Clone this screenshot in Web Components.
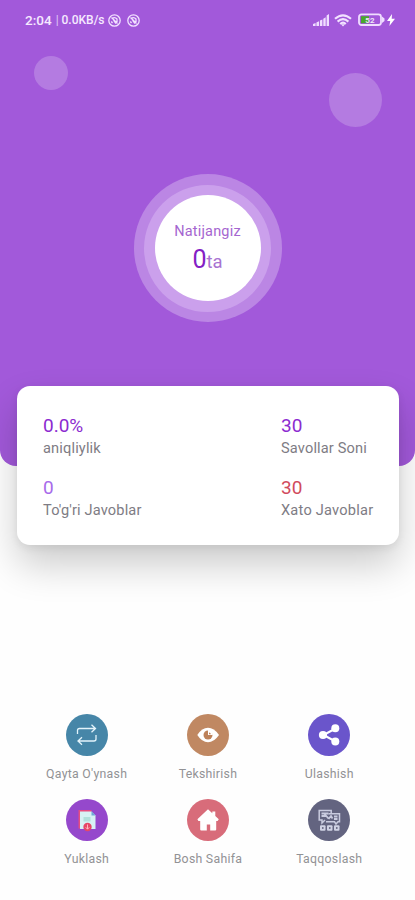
<!DOCTYPE html>
<html lang="uz">
<head>
<meta charset="utf-8">
<meta name="viewport" content="width=device-width">
<title>Natijangiz</title>
<style>
html,body{margin:0;height:100%;background:#fefefe}
body{font-family:Roboto,"Liberation Sans",sans-serif;overflow:hidden}
</style>
</head>
<body>
<result-screen></result-screen>
<script>
const define = (name, html) => customElements.define(name, class extends HTMLElement {
  constructor() {
    super();
    const t = document.createElement('template');
    t.innerHTML = html;
    this.attachShadow({mode: 'open'}).append(t.content.cloneNode(true));
  }
});

define('status-bar', `
<style>
:host{display:flex;align-items:center;height:40px;box-sizing:border-box;padding:0 20px 0 25px;color:#f6e9ff;font-weight:500;white-space:nowrap}
.time{font-size:13.5px;width:28px}
.sep{font-size:12px;width:8.5px;text-align:center;opacity:.75;font-weight:400}
.rate{font-size:12px;width:46.5px}
svg{display:block;flex:none}
.mute{margin-right:6px}
.gap{flex:1}
</style>
<span class="time">2:04</span><span class="sep">|</span><span class="rate">0.0KB/s</span>
<svg class="mute" width="13" height="13" viewBox="0 0 13 13" fill="none" stroke="#f2e2ff" stroke-width="1.3"><circle cx="6.5" cy="6.5" r="5.7"/><path d="M3.300 7.500L4.500 9M4 4.300Q7 2.600 9 5v3M3.500 3.500l6 6M5.500 6l2.500 3.500"/></svg>
<svg class="mute" width="13" height="13" viewBox="0 0 13 13" fill="none" stroke="#f2e2ff" stroke-width="1.3"><circle cx="6.5" cy="6.5" r="5.7"/><path d="M3.300 7.500L4.500 9M4 4.300Q7 2.600 9 5v3M3.500 3.500l6 6M5.500 6l2.500 3.500"/></svg>
<span class="gap"></span>
<svg width="17" height="13" viewBox="0 0 17 13" fill="#efddff"><path d="M0 12V10l2.6-1v3zM3.4 12V8.5L6 7.3V12zM6.9 12V6.6l2.5-1.2V12zM10.3 12V4.7l2.4-1.5V12zM13.6 12V1.600L16 0v12z"/></svg>
<svg style="margin:0 6px 0 4px" width="18" height="13" viewBox="0 0 18 13" fill="none" stroke="#f2e2ff" stroke-width="2.1"><path d="M1 4.8Q9-2.2 17 4.8M3.6 7.6Q9 2.8 14.4 7.6M6.2 10Q9 7.400 11.8 10"/><path d="M7 10.2h4l-2 2.3z" fill="#f2e2ff" stroke="none"/></svg>
<svg width="27" height="14" viewBox="0 0 27 14"><rect x="1" y="1.4" width="22" height="10.6" rx="2.5" fill="none" stroke="#f0deff" stroke-width="1.8"/><path d="M24 3.5l2.5 2v2.5L24 10z" fill="#f0deff"/><path d="M3 3.2h8v7H3z" fill="#4aa62c"/><text x="7.3" y="9.8" font-family="Roboto,sans-serif" font-size="8" font-weight="700" fill="#efe9f5">52</text></svg>
<svg style="margin-left:2px" width="8" height="12" viewBox="0 0 8 12" fill="#fff"><path d="M5 0L0 7h3.2L2.4 12 8 4.8H4.7z"/></svg>`);

define('score-badge', `
<style>
:host{display:grid;place-items:center;width:148px;height:148px;border-radius:50%;background:#bb86e4}
.mid{display:grid;place-items:center;width:127px;height:127px;border-radius:50%;background:#cba0ec}
.in{display:flex;flex-direction:column;align-items:center;width:106px;height:106px;box-sizing:border-box;padding-top:28px;border-radius:50%;background:#fff;color:#a566d0}
.label{font-size:14.5px;line-height:18px;letter-spacing:.18px}
.value{font-size:18.500px;line-height:32px;margin-top:3px;letter-spacing:0;color:#a873d2}
::slotted(b){font-weight:400;font-size:25px;color:#8420c4}
</style>
<div class="mid"><div class="in"><span class="label">Natijangiz</span><span class="value"><slot></slot>ta</span></div></div>`);

define('stat-item', `
<style>
:host{display:block;color:#7e7c84;white-space:nowrap;height:62px}
.n{font-size:19px;line-height:24px;color:var(--tone,#8c2bd0)}
.l{font-size:14.6px;line-height:18px;margin-top:1px;letter-spacing:var(--track,.15px)}
</style>
<div class="n"><slot name="value"></slot></div><div class="l"><slot></slot></div>`);

define('stats-card', `
<style>
:host{display:grid;grid-template-columns:238px 1fr;align-content:start;box-sizing:border-box;height:159px;margin:0 16px 0 17px;padding:28px 0 0 26px;border-radius:13px;background:#fff;box-shadow:0 20px 38px rgba(0,0,0,.2),0 3px 8px rgba(0,0,0,.07)}
</style><slot></slot>`);

define('action-button', `
<style>
:host{display:flex;flex-direction:column;align-items:center;height:85px;color:#929295;font-size:12.3px;white-space:nowrap}
.disc{display:grid;place-items:center;width:42px;height:42px;border-radius:50%;background:var(--disc)}
.label{line-height:16px;margin-top:10px;letter-spacing:var(--track,.27px)}
::slotted(svg){display:block;width:42px;height:42px}
</style>
<div class="disc"><slot name="icon"></slot></div><span class="label"><slot></slot></span>`);

define('result-screen', `
<style>
:host{display:flex;flex-direction:column;height:900px;position:relative}
header{flex:none;height:466px;background:#a259da;border-radius:0 0 16px 16px;display:flex;flex-direction:column}
score-badge{margin:134.4px auto 0}
.bubble{position:absolute;border-radius:50%;background:#b47be1}
stats-card{flex:none;margin-top:-80px;position:relative}
nav{display:grid;grid-template-columns:repeat(3,121.3px);margin:169.4px 0 0 26px}
</style>
<header>
<status-bar></status-bar>
<i class="bubble" style="left:34px;top:56px;width:34px;height:34px"></i>
<i class="bubble" style="left:328.5px;top:73px;width:53px;height:54px"></i>
<score-badge><b>0</b></score-badge>
</header>
<stats-card>
<stat-item><span slot="value">0.0%</span>aniqliylik</stat-item>
<stat-item><span slot="value">30</span>Savollar Soni</stat-item>
<stat-item style="--tone:#a76bea"><span slot="value">0</span>To'g'ri Javoblar</stat-item>
<stat-item style="--tone:#d14b5c;--track:.22px"><span slot="value">30</span>Xato Javoblar</stat-item>
</stats-card>
<nav>
<action-button style="--disc:#4686a8">
<svg slot="icon" viewBox="0 0 42 42" fill="none" stroke="#e4f4fb" stroke-width="1.3"><path d="M11.5 20v-3.5q0-2 2-2H29M25.5 10.8l4 3.7-4 3.7M30 21v4q0 2-2 2H12.500M16 23.300l-4 3.700 4 3.700"/></svg>Qayta O'ynash</action-button>
<action-button style="--disc:#c08862">
<svg slot="icon" viewBox="0 0 42 42"><path d="M10.300 21Q15 13.800 21 13.800T32 21Q27 28.300 21 28.300T10.300 21z" fill="#fff"/><circle cx="21" cy="21" r="4.500" fill="#bd8159"/><path d="M21 16V21h4.700q1-5-4.700-5z" fill="#fff"/><path d="M22 18.500v1.800h1.800q0-1.800-1.800-1.800z" fill="#bd8159"/></svg>Tekshirish</action-button>
<action-button style="--disc:#6a55cb">
<svg slot="icon" viewBox="0 0 42 42" fill="#fff"><path d="M27.500 14.500L15.500 21l12 6.500" fill="none" stroke="#fff" stroke-width="2"/><circle cx="27.300" cy="14.300" r="4"/><circle cx="15" cy="21" r="4.100"/><circle cx="27.300" cy="27.500" r="4"/></svg>Ulashish</action-button>
<action-button style="--disc:#9548cc">
<svg slot="icon" viewBox="0 0 42 42"><path d="M12.500 11h13v18.500h-13z" fill="#e64c80"/><path d="M14 12.500h11.500l4 4V30H14z" fill="#d7f2f4"/><path d="M25.500 12l4 4.500h-4z" fill="#70a8d6"/><path d="M17.500 18h7v4.500h-7z" fill="#b1e1dc"/><circle cx="21.500" cy="28" r="4.200" fill="#e64866"/><path d="M21.500 25.500v4.500M19.700 28.300l1.800 1.900 1.800-1.900" fill="none" stroke="#ffb6bd"/></svg>Yuklash</action-button>
<action-button style="--disc:#d86c7a">
<svg slot="icon" viewBox="0 0 42 42"><path d="M21 10.300l4.300 4v-1.800h3V17l3.500 3.300-1.200 1.700h-1.400v8.500q0 1-1 1h-5v-6h-3.400v6h-5.600q-1 0-1-1V22h-1.800l-1-1.700z" fill="#fff"/></svg>Bosh Sahifa</action-button>
<action-button style="--disc:#636480">
<svg slot="icon" viewBox="0 0 42 42" fill="none" stroke="#c9cbdf" stroke-width="1.500"><path d="M17 21l-3 3v-3h-2.800v-9.500h12v3M20.500 14.800h11v8h-1.500l-2 2.200-1.500-2.200H18"/><path d="M13.500 14.500h7M13.500 17h4.500M16.500 15l4 4.500M20.500 20l2.500-3 1.500 2.500M26 17.500h3.500M26 20h3.500" stroke-width="1.800"/><g fill="#d0d2e4" stroke="none"><rect x="12" y="26.200" width="5.500" height="5.500" rx="1"/><rect x="19" y="26.200" width="5.500" height="5.500" rx="1"/><rect x="26" y="26.200" width="5.500" height="5.500" rx="1"/></g><g fill="#636480" stroke="none"><circle cx="14.800" cy="29" r=".9"/><circle cx="21.800" cy="29" r=".9"/><circle cx="28.800" cy="29" r=".9"/></g></svg>Taqqoslash</action-button>
</nav>`);
</script>
</body>
</html>
